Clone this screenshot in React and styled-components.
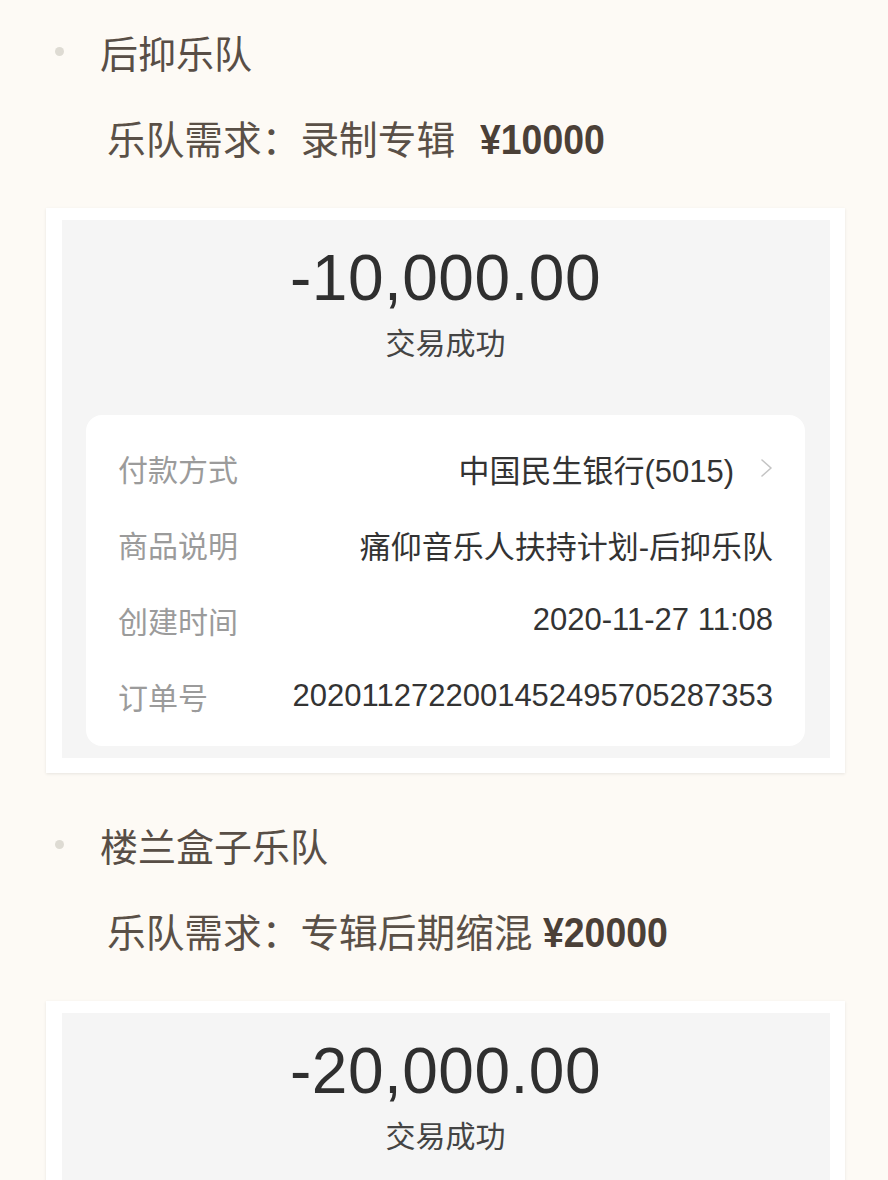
import React from "react";
import styled, { createGlobalStyle } from "styled-components";

const Global = createGlobalStyle`
  html, body {
    margin: 0;
    padding: 0;
    background: #fdfaf5;
  }
  body {
    font-family: "Liberation Sans", "Noto Sans CJK SC", sans-serif;
    -webkit-font-smoothing: antialiased;
  }
`;

const Page = styled.div`
  display: flex;
  flex-direction: column;
  gap: 47px;
  padding: 27px 0 40px;
  background: #fdfaf5;
  min-height: 1180px;
  box-sizing: border-box;
`;

const Section = styled.section`
  display: flex;
  flex-direction: column;
`;

const Heading = styled.div`
  display: flex;
  align-items: center;
  gap: 36px;
  padding-left: 55px;
  height: 48px;
  font-family: "Noto Sans CJK SC", sans-serif;
  font-size: 38px;
  color: #584e46;
`;

const Bullet = styled.span`
  width: 9px;
  height: 9px;
  border-radius: 50%;
  background: #dedbd3;
  flex: none;
`;

const Demand = styled.div`
  margin-top: 38px;
  padding-left: 107px;
  height: 48px;
  line-height: 48px;
  font-family: "Noto Sans CJK SC", sans-serif;
  font-size: 38.7px;
  color: #5a5047;
  white-space: nowrap;
`;

const Price = styled.span`
  display: inline-block;
  margin-left: ${(p) => p.$gap}px;
  font-family: "Liberation Sans", "Noto Sans CJK SC", sans-serif;
  font-weight: 700;
  font-size: 43px;
  color: #4b4037;
  transform: scaleX(0.87);
  transform-origin: left center;
`;

const Card = styled.div`
  margin: 47px 43px 0 46px;
  padding: 12px 15px 15px 16px;
  background: #ffffff;
  box-shadow: 0 1px 3px rgba(0, 0, 0, 0.09);
`;

const Panel = styled.div`
  display: flex;
  flex-direction: column;
  align-items: center;
  padding: 22px 25px 12px 24px;
  background: #f5f5f5;
`;

const Amount = styled.div`
  height: 72px;
  line-height: 72px;
  font-family: "Liberation Sans", "Noto Sans CJK SC", sans-serif;
  font-size: 64px;
  color: #2f2f2f;
  letter-spacing: 0.5px;
`;

const Status = styled.div`
  margin-top: 9px;
  height: 36px;
  line-height: 36px;
  font-family: "Noto Sans CJK SC", sans-serif;
  font-size: 30px;
  color: #444444;
`;

const Details = styled.div`
  align-self: stretch;
  margin-top: 56px;
  padding: 15px 32px 12px;
  background: #ffffff;
  border-radius: 16px;
  display: flex;
  flex-direction: column;
`;

const Row = styled.div`
  display: flex;
  align-items: center;
  justify-content: space-between;
  height: 76px;
`;

const Label = styled.span`
  font-family: "Noto Sans CJK SC", sans-serif;
  font-size: 30px;
  color: #9b9b9b;
  flex: none;
`;

const Value = styled.span`
  display: flex;
  align-items: center;
  font-family: "Liberation Sans", "Noto Sans CJK SC", sans-serif;
  font-size: 31px;
  color: #333333;
  white-space: nowrap;
`;

const Chevron = styled.svg`
  margin-left: 26px;
  width: 13px;
  height: 20px;
  flex: none;
`;

const sections = [
  {
    name: "后抑乐队",
    need: "录制专辑",
    price: "¥10000",
    gap: 25,
    amount: "-10,000.00",
    rows: [
      { label: "付款方式", value: "中国民生银行(5015)", arrow: true },
      { label: "商品说明", value: "痛仰音乐人扶持计划-后抑乐队" },
      { label: "创建时间", value: "2020-11-27 11:08" },
      { label: "订单号", value: "2020112722001452495705287353" },
    ],
  },
  {
    name: "楼兰盒子乐队",
    need: "专辑后期缩混",
    price: "¥20000",
    gap: 10,
    amount: "-20,000.00",
    rows: [
      { label: "付款方式", value: "中国民生银行(5015)", arrow: true },
      { label: "商品说明", value: "痛仰音乐人扶持计划-楼兰盒子乐队" },
    ],
  },
];

export default function App() {
  return (
    <>
      <Global />
      <Page>
        {sections.map((s) => (
          <Section key={s.name}>
            <Heading>
              <Bullet />
              <span>{s.name}</span>
            </Heading>
            <Demand>
              乐队需求：{s.need}
              <Price $gap={s.gap}>{s.price}</Price>
            </Demand>
            <Card>
              <Panel>
                <Amount>{s.amount}</Amount>
                <Status>交易成功</Status>
                <Details>
                  {s.rows.map((r) => (
                    <Row key={r.label}>
                      <Label>{r.label}</Label>
                      <Value>
                        {r.value}
                        {r.arrow && (
                          <Chevron viewBox="0 0 13 20">
                            <polyline
                              points="2,2 11,10 2,18"
                              fill="none"
                              stroke="#c4c4c4"
                              strokeWidth="1.6"
                              strokeLinecap="round"
                              strokeLinejoin="round"
                            />
                          </Chevron>
                        )}
                      </Value>
                    </Row>
                  ))}
                </Details>
              </Panel>
            </Card>
          </Section>
        ))}
      </Page>
    </>
  );
}
